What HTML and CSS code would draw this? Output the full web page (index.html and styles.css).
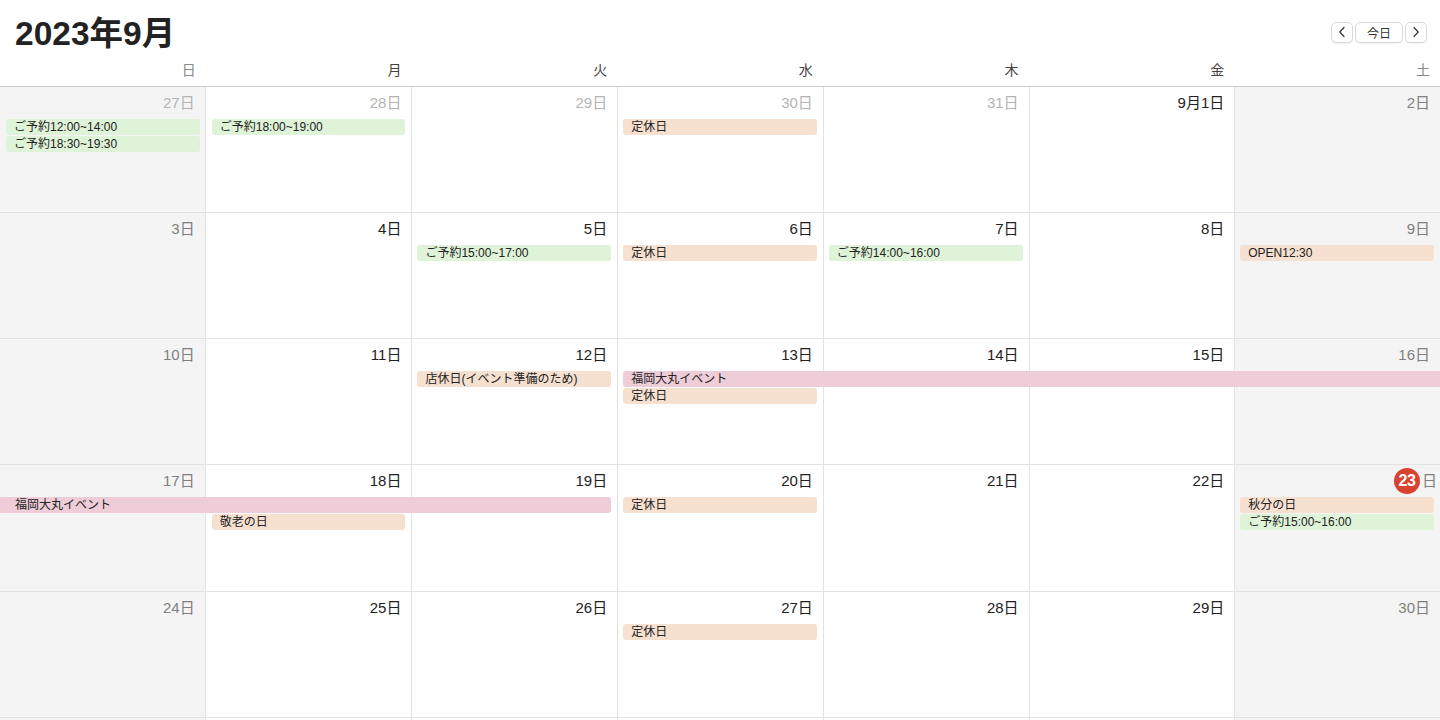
FILE: index.html
```html
<!DOCTYPE html>
<html lang="ja">
<head>
    <meta charset="UTF-8">
    <meta name="viewport" content="width=device-width, initial-scale=1.0">
    <title>カレンダー 2023年9月</title>
    <link rel="stylesheet" href="styles.css">
</head>
<body>
    <header class="toolbar">
        <h1 class="title">2023年9月</h1>
        <div class="nav">
            <button type="button" class="nav-btn arrow" aria-label="前の月">
                <svg width="8" height="12" viewBox="0 0 8 12"><path d="M6 1.5 L1.8 6 L6 10.5" fill="none" stroke="#333" stroke-width="1.2" stroke-linecap="round" stroke-linejoin="round"/></svg>
            </button>
            <button type="button" class="nav-btn today-btn">今日</button>
            <button type="button" class="nav-btn arrow" aria-label="次の月">
                <svg width="8" height="12" viewBox="0 0 8 12"><path d="M2 1.5 L6.2 6 L2 10.5" fill="none" stroke="#333" stroke-width="1.2" stroke-linecap="round" stroke-linejoin="round"/></svg>
            </button>
        </div>
    </header>

    <div class="weekdays">
        <div class="wd weekend">日</div>
        <div class="wd">月</div>
        <div class="wd">火</div>
        <div class="wd">水</div>
        <div class="wd">木</div>
        <div class="wd">金</div>
        <div class="wd weekend">土</div>
    </div>

    <div class="month">
        <!-- week 1 -->
        <div class="week">
            <div class="day weekend other"><span class="num">27日</span></div>
            <div class="day other"><span class="num">28日</span></div>
            <div class="day other"><span class="num">29日</span></div>
            <div class="day other"><span class="num">30日</span></div>
            <div class="day other"><span class="num">31日</span></div>
            <div class="day"><span class="num">9月1日</span></div>
            <div class="day weekend"><span class="num">2日</span></div>

            <div class="event green" style="grid-column: 1; grid-row: 2">ご予約12:00~14:00</div>
            <div class="event green" style="grid-column: 1; grid-row: 3">ご予約18:30~19:30</div>
            <div class="event green" style="grid-column: 2; grid-row: 2">ご予約18:00~19:00</div>
            <div class="event peach" style="grid-column: 4; grid-row: 2">定休日</div>
        </div>

        <!-- week 2 -->
        <div class="week">
            <div class="day weekend"><span class="num">3日</span></div>
            <div class="day"><span class="num">4日</span></div>
            <div class="day"><span class="num">5日</span></div>
            <div class="day"><span class="num">6日</span></div>
            <div class="day"><span class="num">7日</span></div>
            <div class="day"><span class="num">8日</span></div>
            <div class="day weekend"><span class="num">9日</span></div>

            <div class="event green" style="grid-column: 3; grid-row: 2">ご予約15:00~17:00</div>
            <div class="event peach" style="grid-column: 4; grid-row: 2">定休日</div>
            <div class="event green" style="grid-column: 5; grid-row: 2">ご予約14:00~16:00</div>
            <div class="event peach" style="grid-column: 7; grid-row: 2">OPEN12:30</div>
        </div>

        <!-- week 3 -->
        <div class="week">
            <div class="day weekend"><span class="num">10日</span></div>
            <div class="day"><span class="num">11日</span></div>
            <div class="day"><span class="num">12日</span></div>
            <div class="day"><span class="num">13日</span></div>
            <div class="day"><span class="num">14日</span></div>
            <div class="day"><span class="num">15日</span></div>
            <div class="day weekend"><span class="num">16日</span></div>

            <div class="event peach" style="grid-column: 3; grid-row: 2">店休日(イベント準備のため)</div>
            <div class="event pink cont-right" style="grid-column: 4 / 8; grid-row: 2">福岡大丸イベント</div>
            <div class="event peach" style="grid-column: 4; grid-row: 3">定休日</div>
        </div>

        <!-- week 4 -->
        <div class="week tall">
            <div class="day weekend"><span class="num">17日</span></div>
            <div class="day"><span class="num">18日</span></div>
            <div class="day"><span class="num">19日</span></div>
            <div class="day"><span class="num">20日</span></div>
            <div class="day"><span class="num">21日</span></div>
            <div class="day"><span class="num">22日</span></div>
            <div class="day weekend is-today"><span class="num"><span class="badge">23</span>日</span></div>

            <div class="event pink cont-left" style="grid-column: 1 / 4; grid-row: 2">福岡大丸イベント</div>
            <div class="event peach" style="grid-column: 2; grid-row: 3">敬老の日</div>
            <div class="event peach" style="grid-column: 4; grid-row: 2">定休日</div>
            <div class="event peach" style="grid-column: 7; grid-row: 2">秋分の日</div>
            <div class="event green" style="grid-column: 7; grid-row: 3">ご予約15:00~16:00</div>
        </div>

        <!-- week 5 -->
        <div class="week">
            <div class="day weekend"><span class="num">24日</span></div>
            <div class="day"><span class="num">25日</span></div>
            <div class="day"><span class="num">26日</span></div>
            <div class="day"><span class="num">27日</span></div>
            <div class="day"><span class="num">28日</span></div>
            <div class="day"><span class="num">29日</span></div>
            <div class="day weekend"><span class="num">30日</span></div>

            <div class="event peach" style="grid-column: 4; grid-row: 2">定休日</div>
        </div>

        <!-- week 6 (scrolled below the fold) -->
        <div class="week">
            <div class="day weekend other"></div>
            <div class="day other"></div>
            <div class="day other"></div>
            <div class="day other"></div>
            <div class="day other"></div>
            <div class="day other"></div>
            <div class="day weekend other"></div>
        </div>
    </div>
</body>
</html>
```

FILE: styles.css
```css
 body {
     font-family: "Liberation Sans", "Noto Sans CJK JP", sans-serif;
     margin: 0;
     padding: 0;
     color: #222;
     background: #fff;
     overflow: hidden;
 }
 .toolbar {
     height: 54px;
     box-sizing: border-box;
     padding: 12px 13px 0 15px;
     display: flex;
     justify-content: space-between;
     align-items: center;
 }
 .title {
     margin: 0;
     margin-top: 2px;
     font-size: 33.5px;
     line-height: 38px;
     font-weight: bold;
     color: #222;
 }
 .nav {
     display: flex;
     gap: 2px;
     align-items: center;
     margin-top: -2px;
 }
 .nav-btn {
     height: 21px;
     padding: 0;
     border: 1px solid #d9d9d9;
     border-radius: 5px;
     background: #fff;
     box-shadow: 0 1px 1px rgba(0, 0, 0, 0.06);
     display: flex;
     align-items: center;
     justify-content: center;
     cursor: pointer;
 }
 .nav-btn.arrow {
     width: 22px;
 }
 .today-btn {
     width: 48px;
     font-family: "Noto Sans CJK JP", sans-serif;
     font-size: 12px;
     color: #333;
 }
 .weekdays {
     display: grid;
     grid-template-columns: repeat(7, 1fr);
     height: 32px;
     border-bottom: 1px solid #cdcdcd;
 }
 .wd {
     text-align: right;
     padding-right: 10px;
     line-height: 30px;
     font-size: 14px;
     color: #444;
     font-family: "Noto Sans CJK JP", sans-serif;
 }
 .wd.weekend {
     color: #888;
 }
 .week {
     display: grid;
     grid-template-columns: repeat(7, 1fr);
     grid-template-rows: 32px 17px 17px 1fr;
     height: 126px;
     box-sizing: border-box;
     border-bottom: 1px solid #e2e2e2;
 }
 .week.tall {
     height: 127px;
 }
 .day {
     grid-row: 1 / -1;
     border-left: 1px solid #e2e2e2;
     display: flex;
     justify-content: flex-end;
     align-items: flex-start;
     padding: 7px 10px 0 0;
 }
 .week > .day:nth-child(1) { grid-column: 1; border-left: none; border-right: 1px solid #e2e2e2; }
 .week > .day:nth-child(2) { grid-column: 2; border-left: none; }
 .week > .day:nth-child(3) { grid-column: 3; }
 .week > .day:nth-child(4) { grid-column: 4; }
 .week > .day:nth-child(5) { grid-column: 5; }
 .week > .day:nth-child(6) { grid-column: 6; }
 .week > .day:nth-child(7) { grid-column: 7; }
 .day.weekend {
     background-color: #f4f4f4;
 }
 .num {
     font-size: 15px;
     line-height: 18px;
     color: #222;
     display: flex;
     align-items: center;
 }
 .day.weekend .num {
     color: #808080;
 }
 .day.other .num {
     color: #b4b4b4;
 }
 .day.is-today {
     padding: 3px 3px 0 0;
 }
 .badge {
     width: 26px;
     height: 26px;
     border-radius: 50%;
     background-color: #d8432f;
     color: #fff;
     font-weight: bold;
     font-size: 16px;
     display: flex;
     align-items: center;
     justify-content: center;
     margin-right: 2px;
     letter-spacing: -0.5px;
 }
 .event {
     margin: 0 6px;
     height: 16px;
     line-height: 16px;
     padding: 0 8px;
     border-radius: 3px;
     font-size: 12px;
     color: #222;
     white-space: nowrap;
     overflow: hidden;
 }
 .event.green {
     background-color: #def3d7;
 }
 .event.peach {
     background-color: #f6e0d0;
 }
 .event.pink {
     background-color: #eecdd9;
 }
 .event.cont-right {
     margin-right: 0;
     border-top-right-radius: 0;
     border-bottom-right-radius: 0;
 }
 .event.cont-left {
     margin-left: 0;
     padding-left: 15px;
     border-top-left-radius: 0;
     border-bottom-left-radius: 0;
 }
```
